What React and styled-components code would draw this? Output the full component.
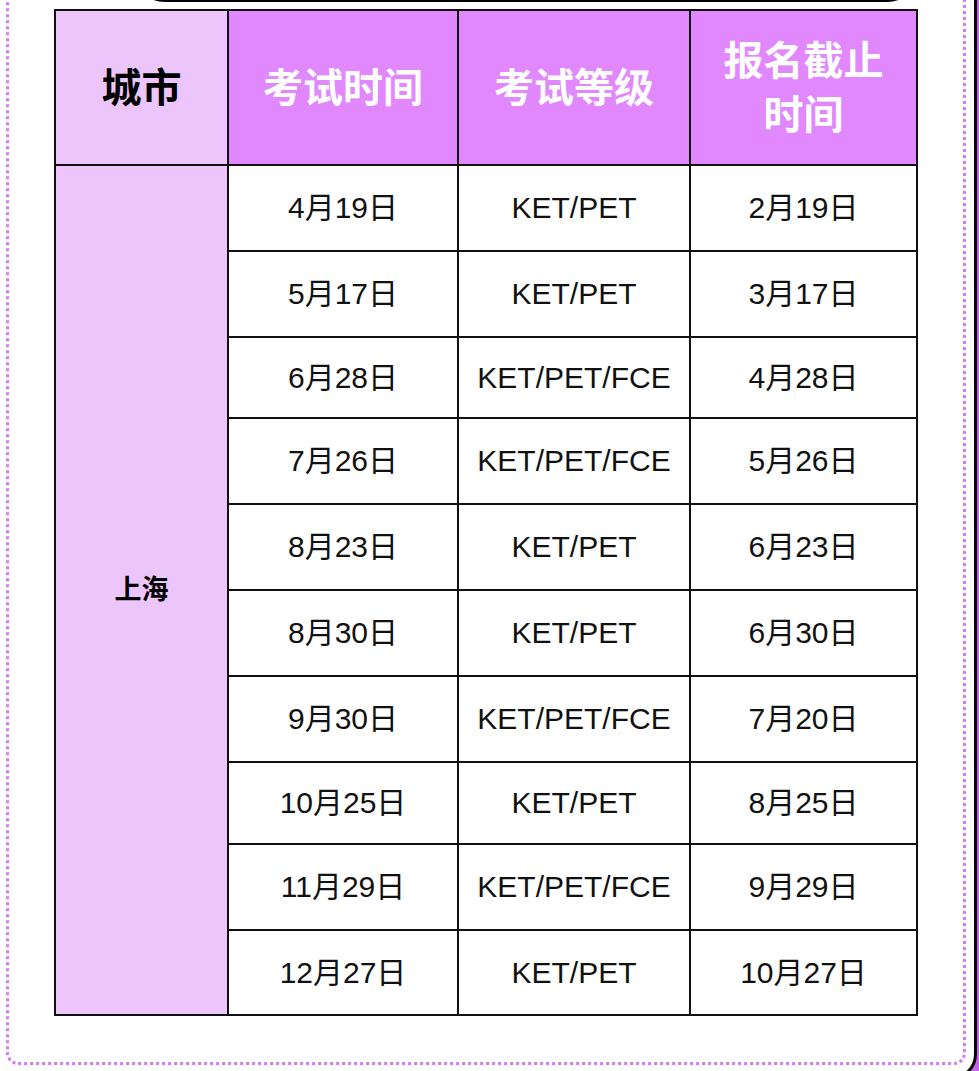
import React from "react";
import styled, { createGlobalStyle } from "styled-components";

const GlobalStyle = createGlobalStyle`
  html, body {
    margin: 0;
    padding: 0;
    background: #c466ea;
  }
  body {
    font-family: "Liberation Sans", "Noto Sans CJK SC", sans-serif;
  }
`;

const Page = styled.div`
  width: 979px;
  height: 1071px;
  overflow: hidden;
  background: #c466ea;
`;

const Card = styled.div`
  box-sizing: border-box;
  width: 993px;
  height: 1140px;
  margin: -60px 0 0 -16px;
  background: #fff;
  border: 3px solid #000;
  border-radius: 26px;
  padding: 0 8px 12px 19px;
  display: flex;
  flex-direction: column;
`;

const Dotted = styled.div`
  flex: 1;
  border: 3px dotted #d47bf1;
  border-top: none;
  border-radius: 0 0 12px 12px;
  display: flex;
  flex-direction: column;
  align-items: center;
`;

const TitlePill = styled.div`
  box-sizing: border-box;
  width: 790px;
  height: 49px;
  margin: 10px 0 7px 80px;
  border: 2px solid #000;
  border-top: none;
  border-radius: 0 0 34px 34px;
  background: #fff;
`;

const Table = styled.table`
  width: 862px;
  table-layout: fixed;
  border-collapse: collapse;
  border: 2px solid #111;
`;

const Th = styled.th`
  height: 153px;
  padding: 0 14px;
  border: 2px solid #111;
  background: ${(p) => (p.light ? "#ecc5fa" : "#e188fe")};
  color: ${(p) => (p.light ? "#000" : "#fff")};
  font-size: 40px;
  font-weight: 700;
  line-height: 54px;
  text-align: center;
`;

const Td = styled.td`
  height: ${(p) => p.h}px;
  padding: 0;
  border: 2px solid #111;
  background: #fff;
  color: #111;
  font-size: 30px;
  line-height: 34px;
  text-align: center;
  vertical-align: middle;
`;

const CityCell = styled.td`
  border: 2px solid #111;
  background: #ecc5fa;
  color: #000;
  font-size: 27px;
  font-weight: 700;
  line-height: 34px;
  text-align: center;
  vertical-align: middle;
`;

const rows = [
  ["4月19日", "KET/PET", "2月19日", 84],
  ["5月17日", "KET/PET", "3月17日", 84],
  ["6月28日", "KET/PET/FCE", "4月28日", 79],
  ["7月26日", "KET/PET/FCE", "5月26日", 84],
  ["8月23日", "KET/PET", "6月23日", 84],
  ["8月30日", "KET/PET", "6月30日", 84],
  ["9月30日", "KET/PET/FCE", "7月20日", 84],
  ["10月25日", "KET/PET", "8月25日", 80],
  ["11月29日", "KET/PET/FCE", "9月29日", 84],
  ["12月27日", "KET/PET", "10月27日", 83],
];

const App = () => {
  return (
    <>
      <GlobalStyle />
      <Page>
        <Card>
          <Dotted>
            <TitlePill />
            <Table>
              <colgroup>
                <col style={{ width: 173 }} />
                <col style={{ width: 230 }} />
                <col style={{ width: 232 }} />
                <col style={{ width: 227 }} />
              </colgroup>
              <thead>
                <tr>
                  <Th light>城市</Th>
                  <Th>考试时间</Th>
                  <Th>考试等级</Th>
                  <Th>报名截止时间</Th>
                </tr>
              </thead>
              <tbody>
                {rows.map(([date, level, deadline, h], i) => (
                  <tr key={date}>
                    {i === 0 && <CityCell rowSpan={rows.length}>上海</CityCell>}
                    <Td h={h}>{date}</Td>
                    <Td h={h}>{level}</Td>
                    <Td h={h}>{deadline}</Td>
                  </tr>
                ))}
              </tbody>
            </Table>
          </Dotted>
        </Card>
      </Page>
    </>
  );
};

export default App;
